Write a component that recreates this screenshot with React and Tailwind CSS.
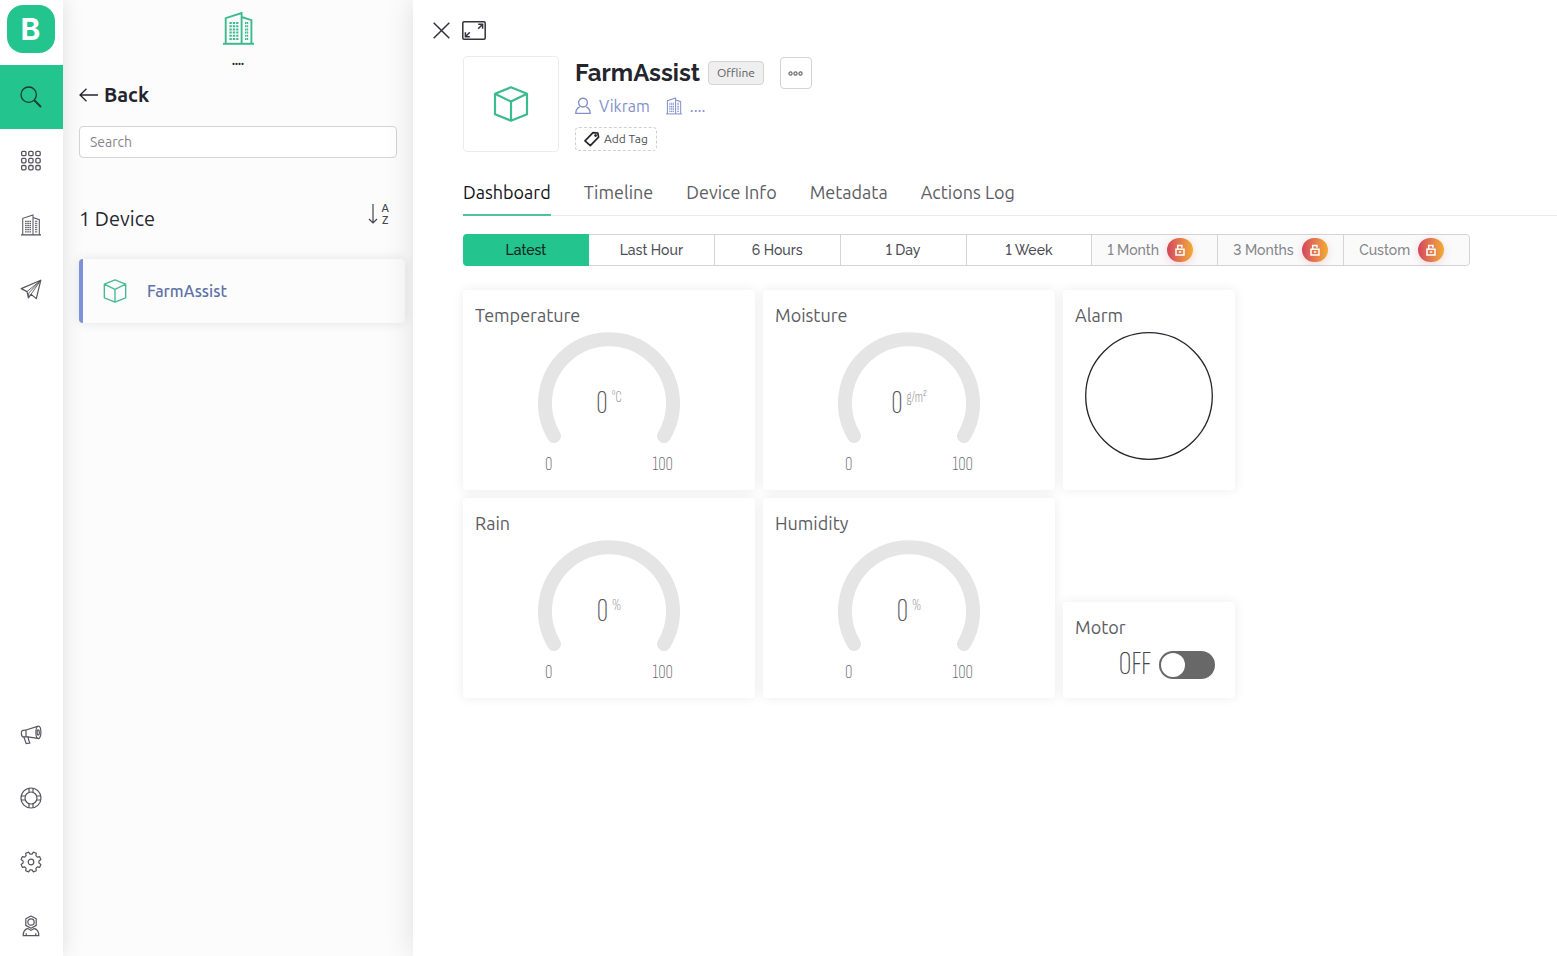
import React from "react";

const ubuntu = "font-['Ubuntu','Noto_Sans',sans-serif]";
const raleway = "font-['Raleway','Lato',sans-serif] lining-nums";
const narrow = "font-['Sofia_Sans_Extra_Condensed','Roboto_Condensed','Liberation_Sans_Narrow',sans-serif] font-extralight";

function Icon({ box = "0 0 22 22", className = "size-[22px]", width = 1.2, children }) {
  return (
    <svg viewBox={box} className={className} fill="none" stroke="currentColor" strokeWidth={width} aria-hidden="true">
      {children}
    </svg>
  );
}

function SearchIcon() {
  return (
    <Icon width={1.3}>
      <circle cx="8.7" cy="8.7" r="7.7" />
      <path d="M14 14l7 7" strokeWidth="1.8" />
    </Icon>
  );
}

function GridIcon() {
  return (
    <Icon width={1.3}>
      {[1.3, 8.4, 15.5].map((y) =>
        [1.6, 8.7, 15.8].map((x) => <rect key={x + "-" + y} x={x} y={y} width="4.4" height="4.4" rx="1.3" />)
      )}
    </Icon>
  );
}

function BuildingIcon({ className, width = 1.6 }) {
  return (
    <Icon box="0 0 31 33" className={className} width={width}>
      <path d="M0 31.8h31" strokeWidth="2" />
      <path d="M2.7 31.5V6.2L18.6 1v30.5M18.6 5l9.8 3.2v23.3" />
      <path d="M6.4 11h9M6.4 14.2h9M6.4 17.4h9M6.4 20.6h9M6.4 23.8h9M6.4 27h9" strokeWidth="2" strokeDasharray="2.4 1" />
      <path d="M22 11h3.4M22 14.2h3.4M22 17.4h3.4M22 20.6h3.4M22 23.8h3.4M22 27h3.4" strokeWidth="2" strokeDasharray="1.4 .4" />
    </Icon>
  );
}

function PlaneIcon() {
  return (
    <Icon>
      <path d="M1.2 10.6L20.8 2.2 16.3 20.6 11 16.3 8.4 19.8 7 13.6z" strokeLinejoin="round" />
      <path d="M7 13.6L20.8 2.2 8.8 15 8.4 19.8M11 16.3L20.8 2.2" strokeWidth=".9" strokeLinejoin="round" />
    </Icon>
  );
}

function MegaphoneIcon() {
  return (
    <Icon>
      <path d="M2.2 7.6L6 7v6.6l-3.4.2c-1.6-1.6-1.6-4.8-.4-6.2zM6 7l11.6-3.6M6 13.6l11.8 1.8" />
      <ellipse cx="18.4" cy="9.4" rx="2.5" ry="6.2" />
      <ellipse cx="18.2" cy="9.4" rx="1.1" ry="2.6" />
      <path d="M3.8 13.8l2.4 6.8 3.6-.5-1.1-3-.8-3.4" />
    </Icon>
  );
}

function LifebuoyIcon() {
  return (
    <Icon>
      <circle cx="11" cy="11" r="10" />
      <circle cx="11" cy="11" r="6" />
      <path d="M9 1.2v4.2M13 1.2v4.2M9 16.6v4.2M13 16.6v4.2M1.2 9h4.2M1.2 13h4.2M16.6 9h4.2M16.6 13h4.2" />
    </Icon>
  );
}

const gearOutline =
  "M" +
  Array.from({ length: 8 }, (_, i) => {
    const centre = 22.5 + i * 45;
    return [
      [-15, 8],
      [-9, 10.2],
      [9, 10.2],
      [15, 8],
    ]
      .map(([offset, r]) => {
        const a = ((centre + offset) * Math.PI) / 180;
        return `${(11 + r * Math.cos(a)).toFixed(2)} ${(11 + r * Math.sin(a)).toFixed(2)}`;
      })
      .join("L");
  }).join("L") +
  "Z";

function GearIcon() {
  return (
    <Icon>
      <path d={gearOutline} strokeLinejoin="round" />
      <circle cx="11" cy="11" r="2.8" />
    </Icon>
  );
}

function EngineerIcon() {
  return (
    <Icon>
      <path d="M11 1l5.2 2.8v6.6L11 13.2l-5.2-2.8V3.8z" strokeLinejoin="round" />
      <circle cx="11" cy="7" r="3.2" />
      <path d="M7.8 13.4c-3 .9-4.6 3.4-4.6 7.2h15.6c0-3.8-1.6-6.3-4.6-7.2M7.8 13.4L11 15.4l3.2-2M6.2 20.4v-2.2M15.8 20.4v-2.2" />
    </Icon>
  );
}

function CubeIcon({ className, width }) {
  return (
    <Icon box="0 0 36 36" className={className} width={width}>
      <path d="M18 1.3l16 6.4v20.6l-16 6.4-16-6.4V7.7zM2 7.7l16 7.9 16-7.9M18 15.6v19.1" strokeLinejoin="round" />
    </Icon>
  );
}

function LockBadge() {
  return (
    <span className="flex h-6 w-[26px] items-center justify-center rounded-full bg-linear-to-r from-[#d3435c] to-[#f0ab2e] text-white shadow-[0_2px_8px_rgba(211,67,92,0.2)]">
      <Icon box="0 0 10 12" className="h-3 w-2.5" width={1.5}>
        <rect x="1" y="5.2" width="8" height="5.8" />
        <path d="M2.7 5V1.5h4.2v2.2M3.8 8.1h2.4" />
      </Icon>
    </span>
  );
}

const topNav = [
  { label: "Templates", icon: <GridIcon /> },
  { label: "Organizations", icon: <BuildingIcon className="h-[22px] w-5" width={1.6} /> },
  { label: "Location", icon: <PlaneIcon /> },
];

const bottomNav = [
  { label: "News", icon: <MegaphoneIcon /> },
  { label: "Help", icon: <LifebuoyIcon /> },
  { label: "Settings", icon: <GearIcon /> },
  { label: "Profile", icon: <EngineerIcon /> },
];

function Rail() {
  return (
    <nav className="relative z-10 flex w-[63px] shrink-0 flex-col bg-white text-[#55555c] shadow-[0_0_20px_rgba(0,0,0,0.12)]">
      <div className="flex h-[65px] justify-center pt-[5px] pr-0.5">
        <a href="#home" className="flex size-12 items-center justify-center rounded-2xl bg-[#23c48e] font-['Inter',sans-serif] text-[30px] font-bold text-white">
          B
        </a>
      </div>
      <button aria-label="Search devices" className="flex h-16 items-center justify-center bg-[#23c48e] pr-0.5 text-[#1c3b31]">
        <SearchIcon />
      </button>
      {topNav.map((n) => (
        <button key={n.label} aria-label={n.label} className="flex h-16 items-center justify-center pr-0.5">
          {n.icon}
        </button>
      ))}
      <div className="mt-auto flex flex-col items-center gap-[42px] pr-0.5 pb-[19px]">
        {bottomNav.map((n) => (
          <button key={n.label} aria-label={n.label}>
            {n.icon}
          </button>
        ))}
      </div>
    </nav>
  );
}

function DevicePanel() {
  return (
    <aside className="flex w-[350px] shrink-0 flex-col bg-[#fcfcfc] px-4 pt-3 text-[#24252d]">
      <div className="flex flex-col items-center">
        <BuildingIcon className="h-[33px] w-[31px] text-[#3dba8e]" width={1.9} />
        <span className="text-xs leading-8 font-bold">....</span>
      </div>
      <a href="#back" className="mt-1 flex h-7 items-center gap-1.5 text-xl font-bold">
        <Icon box="0 0 19 14" className="h-3.5 w-[19px]" width={1.3}>
          <path d="M19 7H1M7.5.7L1 7l6.5 6.3" />
        </Icon>
        Back
      </a>
      <input
        type="search"
        aria-label="Search"
        placeholder="Search"
        className="mt-[17px] h-8 rounded border border-[#d3d4d6] bg-white px-2.5 text-sm outline-none placeholder:text-[#85868b]"
      />
      <div className="mt-11 flex h-[34px] justify-between">
        <h2 className="text-xl leading-[34px]">1 Device</h2>
        <button aria-label="Sort alphabetically" className="mr-2 flex h-6 items-center gap-1 text-[#44454c]">
          <Icon box="0 0 10 20" className="h-5 w-2.5" width={1.2}>
            <path d="M5 0v19M1 15l4 4 4-4" />
          </Icon>
          <span className="flex flex-col text-[11px] leading-3 font-medium">
            <span>A</span>
            <span>Z</span>
          </span>
        </button>
      </div>
      <a
        href="#device"
        className="mt-[23px] -mr-2 flex h-16 items-center gap-5 rounded border-l-4 border-[#7d92d8] bg-[#fcfcfc] pl-5 text-base font-medium text-[#5f71a8] shadow-[0_0_12px_rgba(0,0,0,0.1)]"
      >
        <CubeIcon className="size-6 text-[#4ab993]" width={2.1} />
        FarmAssist
      </a>
    </aside>
  );
}

function DeviceHeader() {
  return (
    <header className="flex gap-4">
      <div className="flex size-24 shrink-0 items-center justify-center rounded border border-[#ececee]">
        <CubeIcon className="size-9 text-[#3dba8e]" width={2.2} />
      </div>
      <div className="flex flex-col items-start">
        <div className="flex h-[34px] items-center">
          <h1 className={`${raleway} text-2xl font-bold text-[#24252d]`}>FarmAssist</h1>
          <span className="ml-2 flex h-6 items-center rounded border border-[#d3d4d6] bg-[#efefef] px-2 text-xs text-[#5c5d63]">Offline</span>
          <button aria-label="More actions" className="ml-4 flex size-8 items-center justify-center rounded border border-[#d3d4d6] text-[#6a6b70]">
            <Icon box="0 0 15 5" className="h-[5px] w-[15px]">
              <circle cx="2.5" cy="2.5" r="1.6" />
              <circle cx="7.5" cy="2.5" r="1.6" />
              <circle cx="12.5" cy="2.5" r="1.6" />
            </Icon>
          </button>
        </div>
        <div className="mt-1 flex h-6 items-center text-base text-[#8390cb]">
          <Icon box="0 0 16 18" className="mr-2 h-[18px] w-4" width={1.4}>
            <circle cx="8" cy="5.6" r="4.4" />
            <path d="M4.8 9.8C2.2 10.8.8 13 .8 16.4h14.4c0-3.4-1.4-5.6-4-6.6" />
          </Icon>
          <a href="#owner">Vikram</a>
          <BuildingIcon className="mr-2 ml-4 h-[18px] w-4" width={2} />
          <a href="#organization">....</a>
        </div>
        <button className="mt-[9px] flex h-6 items-center gap-1 rounded border border-dashed border-[#cfd0d3] px-2 text-xs text-[#4d4e55]">
          <Icon box="0 0 16 16" className="size-4 text-[#24252d]" width={1.7}>
            <path d="M9 1.6l4.8.4.8 4.2-8.3 8.4L1 9.8z" strokeLinejoin="round" />
            <circle cx="11.6" cy="4.5" r="1" fill="currentColor" strokeWidth="1" />
          </Icon>
          Add Tag
        </button>
      </div>
    </header>
  );
}

const tabs = ["Dashboard", "Timeline", "Device Info", "Metadata", "Actions Log"];
const ranges = ["Latest", "Last Hour", "6 Hours", "1 Day", "1 Week", "1 Month", "3 Months", "Custom"];

function rangeStyle(i) {
  if (i === 0) return "justify-center bg-[#23c48e] text-[#15211d]";
  if (i < 5) return "justify-center border-y border-r border-[#d3d4d6] bg-white text-[#4d4e55]";
  return "gap-2 border-y border-r border-[#d3d4d6] bg-[#fafafa] pl-[15px] text-[#85868b]";
}

function Card({ title, className = "", children }) {
  return (
    <section className={`rounded bg-white shadow-[0_0_12px_rgba(0,0,0,0.08)] ${className}`}>
      <h3 className="px-3 pt-3 pb-1 text-lg leading-[26px] text-[#5c5d63]">{title}</h3>
      {children}
    </section>
  );
}

function Gauge({ title, unit }) {
  return (
    <Card title={title} className="h-[200px]">
      <div className={`mx-auto w-[142px] ${narrow}`}>
        <div className="grid">
          <svg viewBox="0 0 142 112" className="col-start-1 row-start-1 h-28 w-[142px]" fill="none" aria-hidden="true">
            <path d="M16 104A64 64 0 1 1 126 104" stroke="#e5e5e5" strokeWidth="14" strokeLinecap="round" />
          </svg>
          <div className="col-start-1 row-start-1 flex justify-center gap-1 pt-14 text-[#55565c]">
            <span className="text-[32px] leading-8">0</span>
            <span className="text-base leading-5 text-[#85868b]">{unit}</span>
          </div>
        </div>
        <div className="mt-2.5 flex justify-between px-[7px] text-[21px] leading-5 text-[#6a6b70]">
          <span>0</span>
          <span>100</span>
        </div>
      </div>
    </Card>
  );
}

export default function App() {
  return (
    <div className={`flex min-h-screen bg-white ${ubuntu}`}>
      <Rail />
      <DevicePanel />
      <main className="relative min-w-0 flex-1 bg-white pt-5 shadow-[0_0_28px_rgba(0,0,0,0.12)]">
        <div className="flex h-5 items-center gap-3 pl-5 text-[#33343b]">
          <button aria-label="Close">
            <Icon box="0 0 17 17" className="size-[17px]" width={1.5}>
              <path d="M.7.7l15.6 15.6M16.3.7L.7 16.3" />
            </Icon>
          </button>
          <button aria-label="Full screen">
            <Icon box="0 0 24 19" className="h-[19px] w-6" width={1.5}>
              <rect x=".8" y=".8" width="22.4" height="17.4" rx="1.2" />
              <path d="M16.2 3.3h4.4v4.4M20.4 3.5l-4.2 4.2M7.8 15.7H3.4v-4.4M3.6 15.5l4.2-4.2" />
            </Icon>
          </button>
        </div>
        <div className="pt-4 pl-[50px]">
          <DeviceHeader />
          <div className="mt-6 flex h-10 gap-[33px] border-b border-[#ececee] text-lg text-[#5c5d63]" role="tablist">
            {tabs.map((t, i) => (
              <button
                key={t}
                role="tab"
                aria-selected={i === 0}
                className={i === 0 ? "-mb-px h-10 border-b-2 border-[#4fc49c] pb-1.5 text-[#111216]" : "h-10 pb-2"}
              >
                {t}
              </button>
            ))}
          </div>
          <div className={`mt-[18px] mr-5 grid h-8 max-w-[1007px] grid-cols-8 overflow-hidden rounded ${raleway} text-sm font-medium`}>
            {ranges.map((r, i) => (
              <button key={r} className={`flex items-center whitespace-nowrap last:rounded-r ${rangeStyle(i)}`}>
                {r}
                {i > 4 && <LockBadge />}
              </button>
            ))}
          </div>
          <div className="mt-6 grid grid-cols-[292px_292px_172px] gap-2 pb-6">
            <Gauge title="Temperature" unit="°C" />
            <Gauge title="Moisture" unit="g/m²" />
            <Card title="Alarm">
              <svg viewBox="0 0 128 128" className="mx-auto size-32" fill="none" aria-hidden="true">
                <circle cx="64" cy="64" r="63.3" stroke="#24252d" strokeWidth="1.3" />
              </svg>
            </Card>
            <Gauge title="Rain" unit="%" />
            <Gauge title="Humidity" unit="%" />
            <Card title="Motor" className="h-24 self-end">
              <label className={`flex items-center justify-end gap-2 pt-[5px] pr-5 text-[32px] leading-8 text-[#44454c] ${narrow}`}>
                OFF
                <input
                  type="checkbox"
                  className="h-7 w-14 appearance-none rounded-full bg-[#686868] p-0.5 before:block before:size-6 before:rounded-full before:bg-white"
                />
              </label>
            </Card>
          </div>
        </div>
      </main>
    </div>
  );
}
